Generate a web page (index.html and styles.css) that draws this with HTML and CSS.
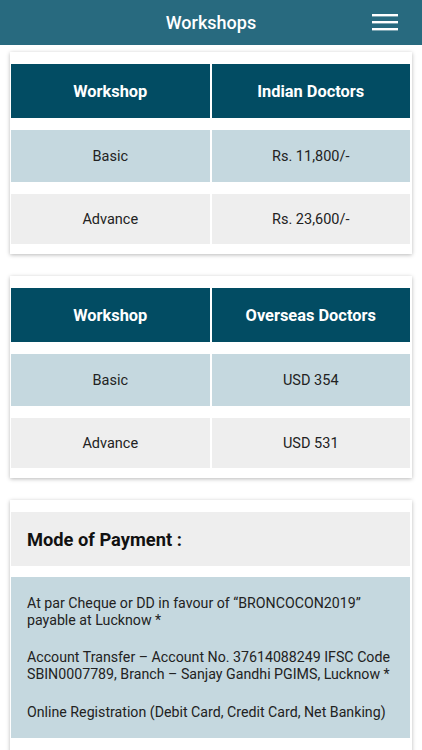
FILE: index.html
```html
<!DOCTYPE html>
<html lang="en">
<head>
    <meta charset="UTF-8">
    <meta name="viewport" content="width=device-width, initial-scale=1.0">
    <title>Workshops</title>
    <link rel="stylesheet" href="styles.css">
</head>
<body>
    <header class="topbar">
        <h1 class="topbar-title">Workshops</h1>
        <span class="menu-btn">
            <svg width="26" height="18" viewBox="0 0 26 18">
                <rect x="0" y="1" width="26" height="2.4" fill="#fff"/>
                <rect x="0" y="8" width="26" height="2.4" fill="#fff"/>
                <rect x="0" y="15" width="26" height="2.4" fill="#fff"/>
            </svg>
        </span>
    </header>

    <main class="content">
        <div class="card">
            <div class="fee-table">
                <div class="cell head">Workshop</div>
                <div class="cell head">Indian Doctors</div>
                <div class="cell blue">Basic</div>
                <div class="cell blue">Rs. 11,800/-</div>
                <div class="cell grey">Advance</div>
                <div class="cell grey">Rs. 23,600/-</div>
            </div>
        </div>

        <div class="card">
            <div class="fee-table">
                <div class="cell head">Workshop</div>
                <div class="cell head">Overseas Doctors</div>
                <div class="cell blue">Basic</div>
                <div class="cell blue">USD 354</div>
                <div class="cell grey">Advance</div>
                <div class="cell grey">USD 531</div>
            </div>
        </div>

        <div class="card payment">
            <div class="payment-title">Mode of Payment :</div>
            <div class="payment-body">
                <p>At par Cheque or DD in favour of “BRONCOCON2019” payable at Lucknow *</p>
                <p>Account Transfer – Account No. 37614088249 IFSC Code SBIN0007789, Branch – Sanjay Gandhi PGIMS, Lucknow *</p>
                <p>Online Registration (Debit Card, Credit Card, Net Banking)</p>
            </div>
        </div>
    </main>
</body>
</html>
```

FILE: styles.css
```css
* {
    margin: 0;
    padding: 0;
    box-sizing: border-box;
}

body {
    font-family: Roboto, "Noto Sans", Arial, sans-serif;
    background: #fff;
    color: #222;
    overflow: hidden;
}

.topbar {
    height: 45px;
    background: #286a7f;
    display: flex;
    align-items: center;
    justify-content: center;
    position: relative;
}

.topbar-title {
    color: #fff;
    font-size: 18px;
    font-weight: 500;
}

.menu-btn {
    position: absolute;
    right: 24px;
    top: 13px;
    display: flex;
}

.content {
    padding: 7px 10px 0 10px;
    display: flex;
    flex-direction: column;
    gap: 22px;
}

.card {
    background: #fff;
    padding: 12px 2px 10px 1px;
    box-shadow: 0 1px 4px rgba(0, 0, 0, 0.28);
}

.fee-table {
    display: grid;
    grid-template-columns: 1fr 1fr;
    grid-template-rows: 54px 52px 50px;
    column-gap: 2px;
    row-gap: 12px;
}

.cell {
    display: flex;
    align-items: center;
    justify-content: center;
    font-size: 14.5px;
    color: #222;
}

.cell.head {
    background: #024c63;
    color: #fff;
    font-weight: 700;
    font-size: 16.4px;
}

.cell.blue {
    background: #c5d8df;
}

.cell.grey {
    background: #eeeeee;
}

.payment {
    padding-bottom: 20px;
}

.payment-title {
    height: 54px;
    background: #eeeeee;
    display: flex;
    align-items: center;
    padding-left: 16px;
    font-size: 18.3px;
    font-weight: 700;
    color: #111;
    margin-bottom: 11px;
}

.payment-body {
    background: #c5d8df;
    padding: 17.5px 16px;
    font-size: 14.2px;
    line-height: 17px;
    color: #222;
}

.payment-body p + p {
    margin-top: 20.5px;
}
```
